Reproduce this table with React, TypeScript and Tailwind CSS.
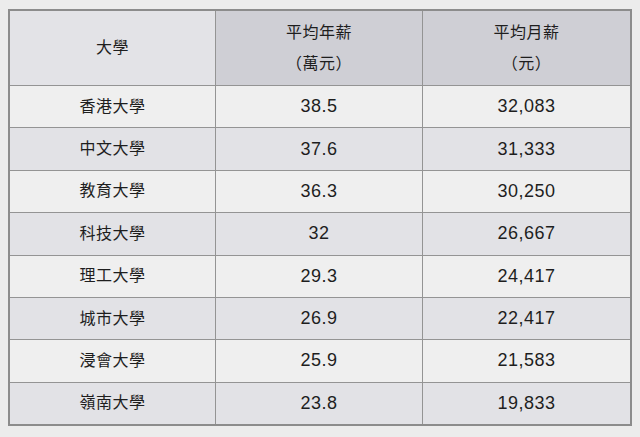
import React from 'react';

const rows = [
  { name: '香港大學', year: '38.5', month: '32,083' },
  { name: '中文大學', year: '37.6', month: '31,333' },
  { name: '教育大學', year: '36.3', month: '30,250' },
  { name: '科技大學', year: '32', month: '26,667' },
  { name: '理工大學', year: '29.3', month: '24,417' },
  { name: '城市大學', year: '26.9', month: '22,417' },
  { name: '浸會大學', year: '25.9', month: '21,583' },
  { name: '嶺南大學', year: '23.8', month: '19,833' },
];

const font = { fontFamily: '"Liberation Sans", "Noto Sans CJK TC", sans-serif' };

export default function App() {
  return (
    <div className="w-[640px] h-[437px] bg-[#ececec] pt-[9px] pl-[8px]" style={font}>
      <div className="w-[624px] h-[417px] border-2 border-[#8c8c8c] flex flex-col text-[16px] text-[#1e1e1e] tracking-[0.5px]">
        {/* header */}
        <div className="h-[75px] shrink-0 grid grid-cols-[206px_207px_1fr] border-b-[1.5px] border-[#949494]">
          <div className="bg-[#e3e3e7] border-r-[1.5px] border-[#949494] flex items-center justify-center">
            大學
          </div>
          <div className="bg-[#cfcfd5] border-r-[1.5px] border-[#949494] flex flex-col items-center justify-center leading-[31px]">
            <span>平均年薪</span>
            <span>（萬元）</span>
          </div>
          <div className="bg-[#cfcfd5] flex flex-col items-center justify-center leading-[31px]">
            <span>平均月薪</span>
            <span>（元）</span>
          </div>
        </div>

        {/* body */}
        {rows.map((r, i) => (
          <div
            key={r.name}
            className={
              'flex-1 grid grid-cols-[206px_207px_1fr] ' +
              (i > 0 ? 'border-t-[1.5px] border-[#949494] ' : '') +
              (i % 2 === 0 ? 'bg-[#efefef]' : 'bg-[#e2e2e6]')
            }
          >
            <div className="border-r-[1.5px] border-[#949494] flex items-center justify-center">{r.name}</div>
            <div className="border-r-[1.5px] border-[#949494] flex items-center justify-center text-[18px]">{r.year}</div>
            <div className="flex items-center justify-center text-[18px]">{r.month}</div>
          </div>
        ))}
      </div>
    </div>
  );
}
